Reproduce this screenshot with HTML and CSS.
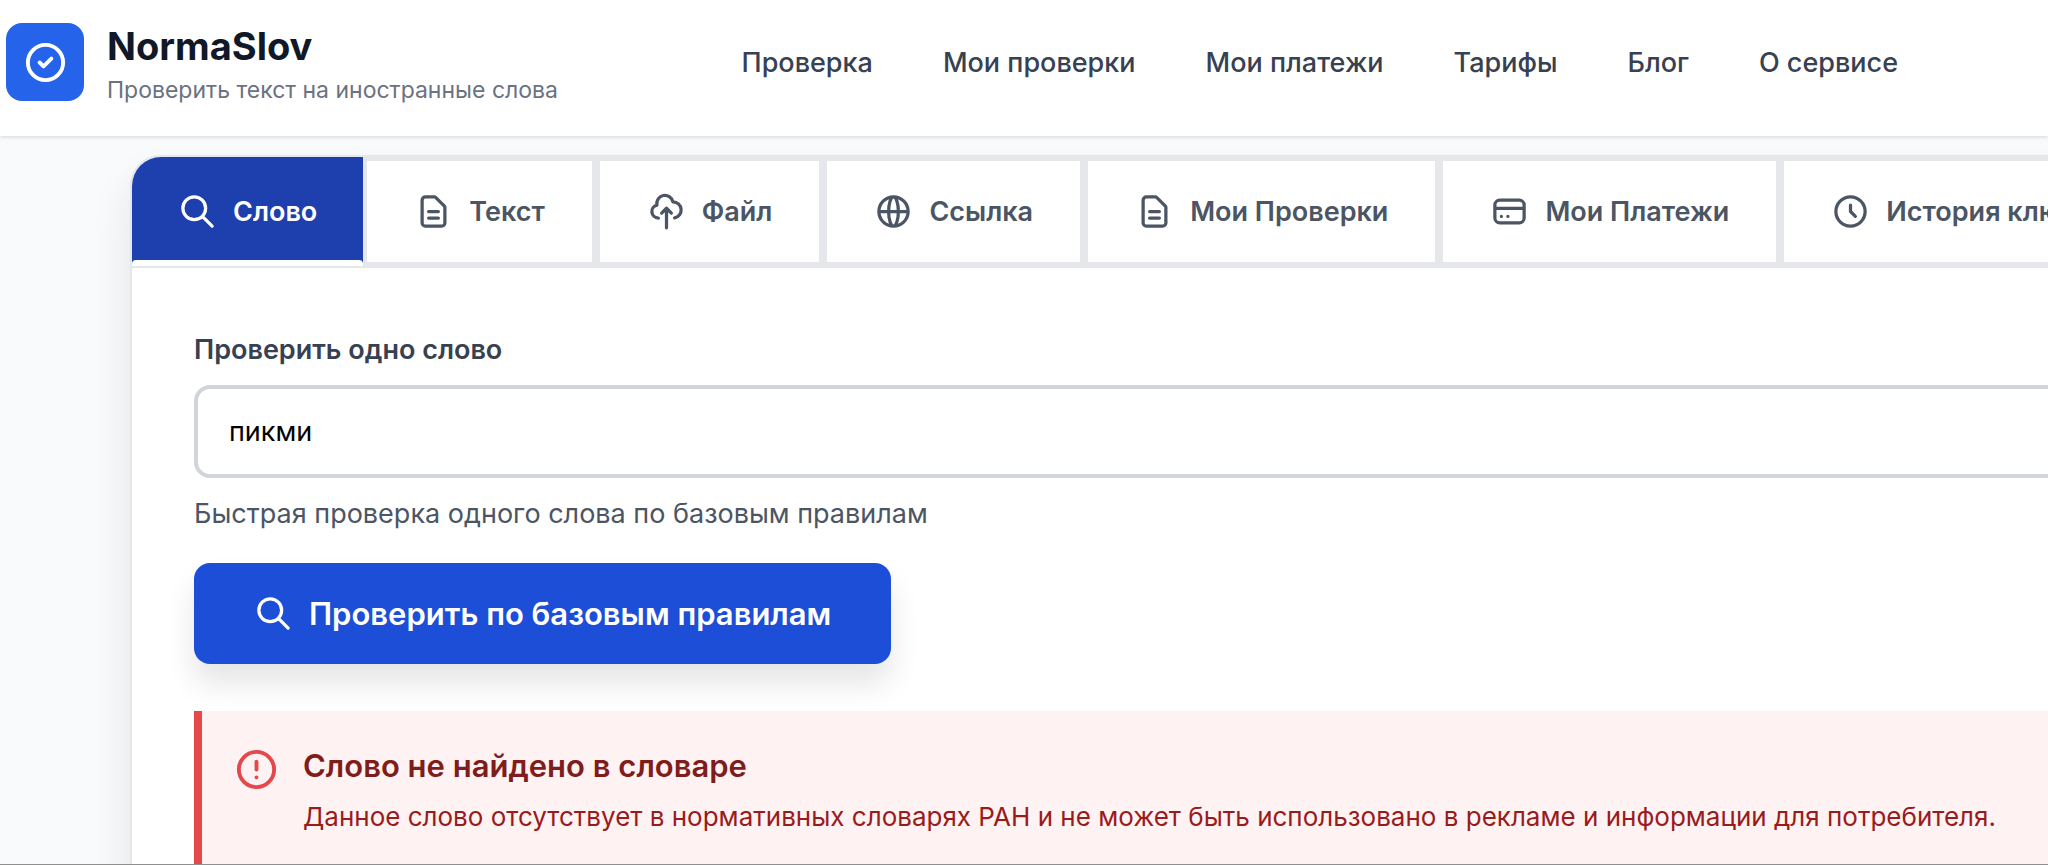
FILE: index.html
```html
<!DOCTYPE html>
<html lang="ru">
<head>
    <meta charset="UTF-8">
    <meta name="viewport" content="width=device-width, initial-scale=1.0">
    <title>NormaSlov</title>
    <link rel="stylesheet" href="styles.css">
</head>
<body>
    <header class="header">
        <a class="brand" href="#">
            <span class="logo">
                <svg viewBox="0 0 24 24"><path d="M9 12l2 2 4-4m6 2a9 9 0 11-18 0 9 9 0 0118 0z"/></svg>
            </span>
            <span class="brand-text">
                <span class="brand-name">NormaSlov</span>
                <span class="brand-slogan">Проверить текст на иностранные слова</span>
            </span>
        </a>
        <nav class="nav">
            <a href="#">Проверка</a>
            <a href="#">Мои проверки</a>
            <a href="#">Мои платежи</a>
            <a href="#">Тарифы</a>
            <a href="#">Блог</a>
            <a href="#">О сервисе</a>
        </nav>
    </header>

    <main class="main">
        <div class="card">
            <div class="tabs" role="tablist">
                <button class="tab active" type="button" role="tab" aria-selected="true">
                    <svg class="icon" viewBox="0 0 24 24"><path d="M21 21l-6-6m2-5a7 7 0 11-14 0 7 7 0 0114 0z"/></svg>
                    Слово
                </button>
                <button class="tab" type="button" role="tab">
                    <svg class="icon" viewBox="0 0 24 24"><path d="M9 12h6m-6 4h6m2 5H7a2 2 0 01-2-2V5a2 2 0 012-2h5.586a1 1 0 01.707.293l5.414 5.414a1 1 0 01.293.707V19a2 2 0 01-2 2z"/></svg>
                    Текст
                </button>
                <button class="tab" type="button" role="tab">
                    <svg class="icon" viewBox="0 0 24 24"><path d="M7 16a4 4 0 01-.88-7.903A5 5 0 1115.9 6L16 6a5 5 0 011 9.9M15 13l-3-3m0 0l-3 3m3-3v12"/></svg>
                    Файл
                </button>
                <button class="tab" type="button" role="tab">
                    <svg class="icon" viewBox="0 0 24 24"><path d="M21 12a9 9 0 01-9 9m9-9a9 9 0 00-9-9m9 9H3m9 9a9 9 0 01-9-9m9 9c1.657 0 3-4.03 3-9s-1.343-9-3-9m0 18c-1.657 0-3-4.03-3-9s1.343-9 3-9m-9 9a9 9 0 019-9"/></svg>
                    Ссылка
                </button>
                <button class="tab" type="button" role="tab">
                    <svg class="icon" viewBox="0 0 24 24"><path d="M9 12h6m-6 4h6m2 5H7a2 2 0 01-2-2V5a2 2 0 012-2h5.586a1 1 0 01.707.293l5.414 5.414a1 1 0 01.293.707V19a2 2 0 01-2 2z"/></svg>
                    Мои Проверки
                </button>
                <button class="tab" type="button" role="tab">
                    <svg class="icon" viewBox="0 0 24 24"><path d="M3 10h18M7 15h.01M11 15h.01M6 19h12a3 3 0 003-3V8a3 3 0 00-3-3H6a3 3 0 00-3 3v8a3 3 0 003 3z"/></svg>
                    Мои Платежи
                </button>
                <button class="tab" type="button" role="tab">
                    <svg class="icon" viewBox="0 0 24 24"><path d="M12 8v4l3 3m6-3a9 9 0 11-18 0 9 9 0 0118 0z"/></svg>
                    История ключей
                </button>
            </div>

            <form class="panel">
                <label class="label" for="word">Проверить одно слово</label>
                <input class="input" type="text" id="word" value="пикми">
                <p class="hint">Быстрая проверка одного слова по базовым правилам</p>
                <button class="submit" type="button">
                    <svg class="icon" viewBox="0 0 24 24"><path d="M21 21l-6-6m2-5a7 7 0 11-14 0 7 7 0 0114 0z"/></svg>
                    Проверить по базовым правилам
                </button>

                <div class="alert" role="alert">
                    <svg class="alert-icon" viewBox="0 0 24 24"><path d="M12 8v4m0 4h.01M21 12a9 9 0 11-18 0 9 9 0 0118 0z"/></svg>
                    <div>
                        <h3>Слово не найдено в словаре</h3>
                        <p>Данное слово отсутствует в нормативных словарях РАН и не может быть использовано в рекламе и информации для потребителя.</p>
                    </div>
                </div>
            </form>
        </div>
    </main>
</body>
</html>
```

FILE: styles.css
```css
* {
    box-sizing: border-box;
}
body {
    display: flex;
    flex-direction: column;
    height: 100vh;
    margin: 0;
    overflow: hidden;
    border-bottom: 1px solid #8f8f8f;
    background-color: #f8fafc;
    font-family: Inter, "Noto Sans", sans-serif;
    font-size: 27px;
    line-height: 39px;
    color: #374151;
}
a {
    color: inherit;
    text-decoration: none;
}
button, input {
    font: inherit;
}
svg {
    flex-shrink: 0;
    fill: none;
    stroke: currentColor;
    stroke-width: 2;
    stroke-linecap: round;
    stroke-linejoin: round;
}
.icon {
    width: 39px;
    height: 39px;
}

/* Header */
.header {
    display: flex;
    align-items: center;
    justify-content: space-between;
    padding: 18px 150px 30px 6px;
    background-color: white;
    box-shadow: 0 1px 4px rgba(0, 0, 0, 0.15);
}
.brand {
    display: flex;
    align-items: center;
    gap: 23px;
}
.logo {
    display: flex;
    align-items: center;
    justify-content: center;
    width: 78px;
    height: 78px;
    border-radius: 16px;
    background-color: #2563eb;
    color: white;
}
.logo svg {
    width: 47px;
    height: 47px;
}
.brand-text {
    display: flex;
    flex-direction: column;
}
.brand-name {
    font-size: 38px;
    font-weight: 700;
    line-height: 57px;
    color: #111827;
}
.brand-slogan {
    font-size: 23px;
    line-height: 31px;
    color: #6b7280;
}
.nav {
    display: flex;
    gap: 70px;
    font-weight: 500;
    white-space: nowrap;
}

/* Card, wider than the window on the right */
.main {
    flex: 1;
    min-height: 0;
    padding: 19px 0 0 130px;
}
.card {
    margin-right: -130px;
    min-height: 100%;
    border: 2px solid #e5e7eb;
    border-radius: 31px;
    background-color: white;
    box-shadow: 0 24px 40px rgba(0, 0, 0, 0.09);
}
.tabs {
    display: flex;
    overflow: hidden;
    border-bottom: 2px solid #e5e7eb;
    border-radius: 29px 29px 0 0;
}
.tab {
    display: flex;
    flex-shrink: 0;
    align-items: center;
    gap: 16px;
    padding: 31px 47px;
    border: 4px solid #e5e7eb;
    background-color: white;
    color: #4b5563;
    font-weight: 600;
    white-space: nowrap;
}
.tab.active {
    position: relative;
    padding: 31px 46px;
    border: none;
    background-color: #1e40af;
    color: white;
}
.tab.active::after {
    content: "";
    position: absolute;
    left: 0;
    right: 0;
    bottom: 0;
    height: 6px;
    border-radius: 4px 4px 0 0;
    background-color: white;
}

/* Word check form */
.panel {
    display: flex;
    flex-direction: column;
    align-items: flex-start;
    padding: 62px;
}
.label {
    font-weight: 600;
}
.input {
    width: 100%;
    height: 93px;
    margin: 16px 0;
    padding: 0 31px;
    border: 4px solid #d1d5db;
    border-radius: 16px;
    background-color: white;
    color: black;
}
.hint {
    margin: 0 0 30px;
    color: #4b5563;
}
.submit {
    display: flex;
    align-items: center;
    gap: 16px;
    padding: 31px 60px;
    border: none;
    border-radius: 16px;
    background-color: #1d4ed8;
    box-shadow: 0 20px 30px rgba(0, 0, 0, 0.1);
    color: white;
    font-size: 31px;
    font-weight: 600;
}
.alert {
    display: flex;
    align-self: stretch;
    gap: 23px;
    margin-top: 47px;
    padding: 31px;
    border-left: 8px solid #e5484b;
    background-color: #fef2f2;
    color: #991b1b;
}
.alert-icon {
    width: 47px;
    height: 47px;
    margin-top: 4px;
    color: #e5484b;
}
.alert h3 {
    margin: 0 0 8px;
    font-size: 31px;
    font-weight: 600;
    line-height: 47px;
    color: #7f1d1d;
}
.alert p {
    margin: 0;
    font-size: 26px;
    white-space: nowrap;
}
```
